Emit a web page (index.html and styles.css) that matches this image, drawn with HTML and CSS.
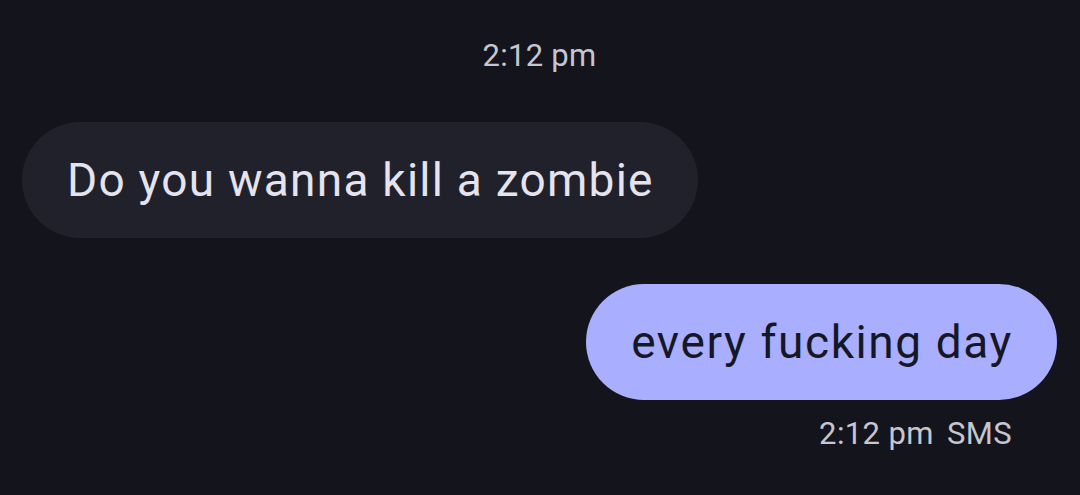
FILE: index.html
```html
<!DOCTYPE html>
<html lang="en">
<head>
    <meta charset="UTF-8">
    <title>Messages</title>
    <link rel="stylesheet" href="styles.css">
</head>
<body>
    <div class="thread">
        <!-- Heure du fil -->
        <div class="stamp">2:12 pm</div>

        <!-- Message reçu -->
        <div class="row in">
            <div class="bubble">Do you wanna kill a zombie</div>
        </div>

        <!-- Message envoyé -->
        <div class="row out">
            <div class="bubble">every fucking day</div>
        </div>
        <div class="meta">
            <span>2:12 pm</span>
            <span>SMS</span>
        </div>
    </div>
</body>
</html>
```

FILE: styles.css
```css
body {
    margin: 0;
    background-color: #14141c;
    font-family: Roboto, "Noto Sans", sans-serif;
    height: 100vh;
    overflow: hidden;
}
.thread {
    display: flex;
    flex-direction: column;
    padding: 38px 23px 0 22px;
}
.stamp {
    text-align: center;
    color: #c6c6d0;
    font-size: 31px;
    line-height: 36px;
    letter-spacing: 0.3px;
}
.row {
    display: flex;
}
.row.in {
    margin-top: 48px;
}
.row.out {
    margin-top: 46px;
    justify-content: flex-end;
}
.bubble {
    border-radius: 58px;
    font-size: 46px;
    line-height: 116px;
    letter-spacing: 1.25px;
    padding: 0 44px 0 45px;
}
.out .bubble {
    background-color: #a9aefe;
    color: #161726;
    letter-spacing: 1.6px;
}
.in .bubble {
    background-color: #20212a;
    color: #e4e3ee;
}
.meta {
    display: flex;
    justify-content: flex-end;
    gap: 13px;
    padding-right: 45px;
    margin-top: 16px;
    color: #c6c6d0;
    font-size: 31px;
    line-height: 36px;
    letter-spacing: 0.4px;
}
```
